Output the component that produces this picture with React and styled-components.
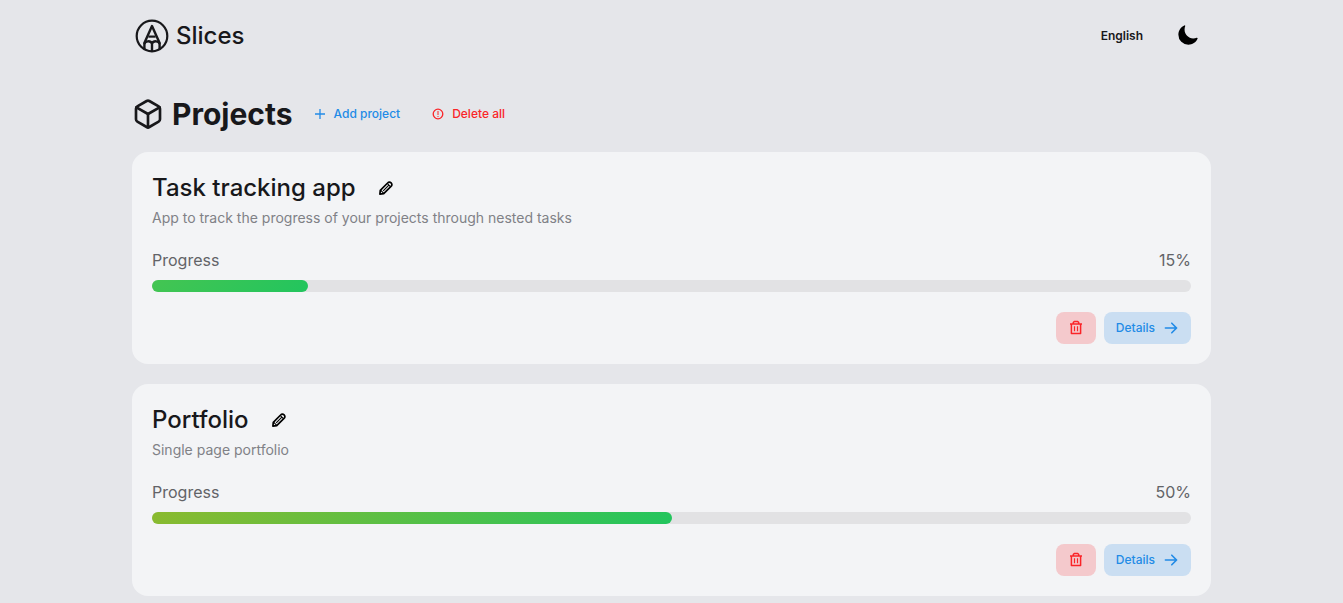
import React from "react";
import styled, { createGlobalStyle } from "styled-components";
import { FiBox } from "react-icons/fi";
import { IoMoon } from "react-icons/io5";
import { HiArrowRight } from "react-icons/hi";

const projects = [
  {
    id: 1,
    title: "Task tracking app",
    description: "App to track the progress of your projects through nested tasks",
    progress: 15,
    from: "#44c552",
  },
  {
    id: 2,
    title: "Portfolio",
    description: "Single page portfolio",
    progress: 50,
    from: "#8aba2f",
  },
];

const Logo = () => (
  <svg width="34" height="36" viewBox="0 -2 34 36" fill="none" stroke="#18181b" strokeWidth="2.4" strokeLinejoin="round" aria-hidden="true">
    <circle cx="17" cy="17" r="15.3" strokeWidth="2.2" />
    <path d="M9.4 30V24L17 7L24.6 24V30" />
    <path d="M13.4 17.6H20.6" strokeWidth="2.2" />
    <path d="M9.4 25C10 21.8 15.6 21.2 17 24.6C18.4 21.2 24 21.8 24.6 25M17 24.4V32" strokeWidth="2.4" />
  </svg>
);

const PencilIcon = () => (
  <svg width="16" height="16" viewBox="0 0 16 16" fill="none" stroke="#000" strokeWidth="1.7" strokeLinejoin="round" aria-hidden="true">
    <path d="M1.9 14.1L2.3 10.3L9.6 3C10.7 1.8 12 1.8 13.1 2.9C14.2 4 14.2 5.3 13 6.4L5.7 13.7Z" />
    <path d="M2.6 10.2L5.7 13.3M9.4 3.6L12.4 6.6M5.2 10.8L10.6 5.4" strokeWidth="1.1" />
  </svg>
);

const PlusIcon = () => (
  <svg width="12" height="12" viewBox="0 0 12 12" stroke="currentColor" aria-hidden="true">
    <path d="M6 1V11M1 6H11" strokeWidth="1.3" />
  </svg>
);

const AlertIcon = () => (
  <svg width="12" height="12" viewBox="0 0 12 12" fill="none" stroke="currentColor" aria-hidden="true">
    <circle cx="6" cy="6" r="4.8" strokeWidth="1.3" />
    <path d="M6 3V7M6 8V9" />
  </svg>
);

const TrashIcon = () => (
  <svg width="16" height="16" viewBox="0 0 16 16" fill="none" stroke="currentColor" strokeWidth="1.5" aria-hidden="true">
    <path d="M2 4H14M3.4 4V13.6H12.6V4M5.3 4V2.6L6.3 1.5H9.7L10.7 2.6V4" strokeLinejoin="round" />
    <path d="M6.5 6.3V11.3M9.5 6.3V11.3" strokeWidth="1.2" />
  </svg>
);

const App = () => {
  return (
    <>
      <GlobalStyle />
      <Container>
        <Header>
          <Brand href="#">
            <Logo />
            Slices
          </Brand>
          <HeaderActions>
            <LanguageButton type="button">English</LanguageButton>
            <IconButton type="button" aria-label="Toggle theme">
              <IoMoon size={22} />
            </IconButton>
          </HeaderActions>
        </Header>

        <main>
          <TitleRow>
            <FiBox size={32} aria-hidden="true" />
            <PageTitle>Projects</PageTitle>
            <TextButton type="button" $color="#228be6">
              <PlusIcon />
              Add project
            </TextButton>
            <TextButton type="button" $color="#fa2428">
              <AlertIcon />
              Delete all
            </TextButton>
          </TitleRow>

          <ProjectList>
            {projects.map((project) => (
              <Card key={project.id}>
                <CardHeader>
                  <CardTitle>{project.title}</CardTitle>
                  <IconButton type="button" aria-label="Edit project">
                    <PencilIcon />
                  </IconButton>
                </CardHeader>
                <Description>{project.description}</Description>
                <ProgressLabel>
                  <span>Progress</span>
                  <span>{project.progress}%</span>
                </ProgressLabel>
                <Track
                  role="progressbar"
                  aria-label="Progress"
                  aria-valuenow={project.progress}
                  aria-valuemin={0}
                  aria-valuemax={100}
                >
                  <Bar $from={project.from} style={{ width: `${project.progress}%` }} />
                </Track>
                <CardActions>
                  <DeleteButton type="button" aria-label="Delete project">
                    <TrashIcon />
                  </DeleteButton>
                  <DetailsButton type="button">
                    Details
                    <HiArrowRight size={16} />
                  </DetailsButton>
                </CardActions>
              </Card>
            ))}
          </ProjectList>
        </main>
      </Container>
    </>
  );
};

const GlobalStyle = createGlobalStyle`
  * {
    box-sizing: border-box;
  }

  body {
    margin: 0;
    background: #e5e6ea;
    color: #18181b;
    font-family: Inter, "Liberation Sans", sans-serif;
    scrollbar-width: none;
  }

  button {
    font-family: inherit;
    border: none;
    background: none;
    padding: 0;
    cursor: pointer;
  }

  svg {
    flex-shrink: 0;
  }
`;

const Container = styled.div`
  max-width: 1079px;
  margin: 0 auto;
  padding-bottom: 20px;
`;

const Header = styled.header`
  display: flex;
  align-items: center;
  justify-content: space-between;
  height: 70px;
  padding: 0 12px 0 3px;
`;

const Brand = styled.a`
  display: flex;
  align-items: center;
  gap: 7px;
  font-size: 24px;
  font-weight: 500;
  color: inherit;
  text-decoration: none;
`;

const HeaderActions = styled.div`
  display: flex;
  align-items: center;
  gap: 34px;
`;

const LanguageButton = styled.button`
  font-size: 12px;
  font-weight: 600;
  color: #18181b;
`;

const IconButton = styled.button`
  display: flex;
  color: #000;
`;

const TitleRow = styled.div`
  display: flex;
  align-items: center;
  height: 40px;
  margin: 24px 0 18px;
`;

const PageTitle = styled.h1`
  margin: 0 21px 0 8px;
  font-size: 30px;
  font-weight: 700;
  line-height: 40px;
`;

const TextButton = styled.button`
  display: flex;
  align-items: center;
  gap: 8px;
  margin-right: 32px;
  font-size: 12px;
  font-weight: 500;
  line-height: 16px;
  color: ${(props) => props.$color};
`;

const ProjectList = styled.div`
  display: flex;
  flex-direction: column;
  gap: 20px;
`;

const Card = styled.section`
  padding: 20px;
  border-radius: 16px;
  background: #f3f4f6;
`;

const CardHeader = styled.div`
  display: flex;
  align-items: center;
  gap: 22px;
`;

const CardTitle = styled.h2`
  margin: 0;
  font-size: 24px;
  font-weight: 500;
  line-height: 32px;
`;

const Description = styled.p`
  margin: 4px 0 20px;
  font-size: 14px;
  font-weight: 400;
  line-height: 20px;
  color: #808186;
`;

const ProgressLabel = styled.div`
  display: flex;
  justify-content: space-between;
  margin-bottom: 8px;
  font-size: 16px;
  line-height: 24px;
  color: #626367;
`;

const Track = styled.div`
  height: 12px;
  border-radius: 6px;
  background: #e2e2e4;
`;

const Bar = styled.div`
  height: 100%;
  border-radius: 6px;
  background: linear-gradient(135deg, ${(props) => props.$from}, #22c55e);
`;

const CardActions = styled.div`
  display: flex;
  justify-content: flex-end;
  gap: 8px;
  margin-top: 20px;
`;

const ActionButton = styled.button`
  display: flex;
  align-items: center;
  gap: 8px;
  height: 32px;
  padding: 0 12px;
  border-radius: 8px;
  font-size: 12px;
  font-weight: 500;
  line-height: 16px;
`;

const DeleteButton = styled(ActionButton)`
  color: #fa2428;
  background: #f4c9cc;
`;

const DetailsButton = styled(ActionButton)`
  color: #228be6;
  background: #cadef2;
`;

export default App;
